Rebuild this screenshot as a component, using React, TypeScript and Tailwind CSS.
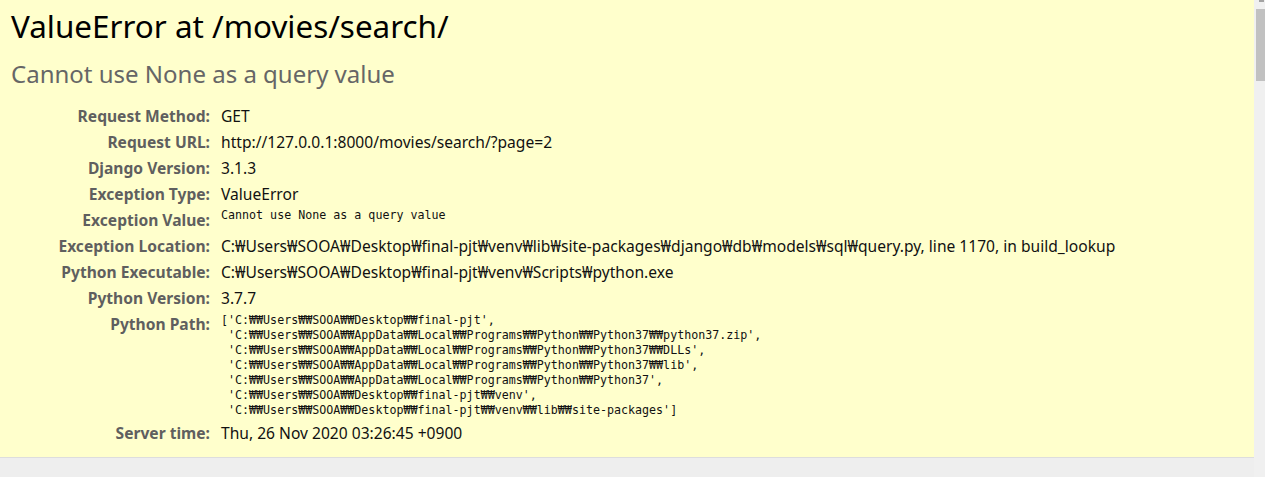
const rows: { label: string; value: string; mono?: boolean }[] = [
  { label: "Request Method:", value: "GET" },
  { label: "Request URL:", value: "http://127.0.0.1:8000/movies/search/?page=2" },
  { label: "Django Version:", value: "3.1.3" },
  { label: "Exception Type:", value: "ValueError" },
  { label: "Exception Value:", value: "Cannot use None as a query value", mono: true },
  {
    label: "Exception Location:",
    value:
      "C:₩Users₩SOOA₩Desktop₩final-pjt₩venv₩lib₩site-packages₩django₩db₩models₩sql₩query.py, line 1170, in build_lookup",
  },
  { label: "Python Executable:", value: "C:₩Users₩SOOA₩Desktop₩final-pjt₩venv₩Scripts₩python.exe" },
  { label: "Python Version:", value: "3.7.7" },
];

const pythonPath = [
  "['C:₩₩Users₩₩SOOA₩₩Desktop₩₩final-pjt',",
  " 'C:₩₩Users₩₩SOOA₩₩AppData₩₩Local₩₩Programs₩₩Python₩₩Python37₩₩python37.zip',",
  " 'C:₩₩Users₩₩SOOA₩₩AppData₩₩Local₩₩Programs₩₩Python₩₩Python37₩₩DLLs',",
  " 'C:₩₩Users₩₩SOOA₩₩AppData₩₩Local₩₩Programs₩₩Python₩₩Python37₩₩lib',",
  " 'C:₩₩Users₩₩SOOA₩₩AppData₩₩Local₩₩Programs₩₩Python₩₩Python37',",
  " 'C:₩₩Users₩₩SOOA₩₩Desktop₩₩final-pjt₩₩venv',",
  " 'C:₩₩Users₩₩SOOA₩₩Desktop₩₩final-pjt₩₩venv₩₩lib₩₩site-packages']",
];

const mono = "font-['DejaVu_Sans_Mono','Liberation_Mono',monospace] text-[11.67px] leading-[15px] whitespace-pre";

function Row({ label, children }: { label: string; children: React.ReactNode }) {
  return (
    <div className="flex items-start">
      <div className="w-[210px] shrink-0 text-right font-bold text-[#5f5f5f] leading-[26px]">{label}</div>
      <div className="pl-[11px] text-[#111]">{children}</div>
    </div>
  );
}

export default function App() {
  return (
    <div className="flex h-[477px] overflow-hidden bg-[#eeeeee] font-['Noto_Sans',sans-serif]">
      <div className="flex-1">
        {/* Summary */}
        <div className="bg-[#ffffcc] border-b border-[#dddddd] h-[458px] pl-[11px] pt-[4px]">
          <h1 className="text-[31.4px] leading-[44px] text-black">ValueError at /movies/search/</h1>
          <h2 className="text-[24px] leading-[34px] text-[#666] mt-[9px]">Cannot use None as a query value</h2>
          <div className="mt-[12px] text-[15.6px] -ml-[11px]">
            {rows.map((r) => (
              <Row key={r.label} label={r.label}>
                {r.mono ? (
                  <div className={`${mono} pt-px`}>{r.value}</div>
                ) : (
                  <div className="leading-[26px] whitespace-nowrap">{r.value}</div>
                )}
              </Row>
            ))}
            <Row label="Python Path:">
              <div className={`${mono} pt-[2px] pb-[2px]`}>{pythonPath.join("\n")}</div>
            </Row>
            <Row label="Server time:">
              <div className="leading-[26px]">Thu, 26 Nov 2020 03:26:45 +0900</div>
            </Row>
          </div>
        </div>
      </div>
      {/* Scrollbar */}
      <div className="w-[11px] bg-[#f0f0f0] flex flex-col items-end">
        <div className="w-[5px] h-[2px] bg-[#a3a3a3] mr-[1px] mt-0" />
        <div className="w-[9px] h-[72px] bg-[#c1c1c1] mt-[7px]" />
      </div>
    </div>
  );
}
